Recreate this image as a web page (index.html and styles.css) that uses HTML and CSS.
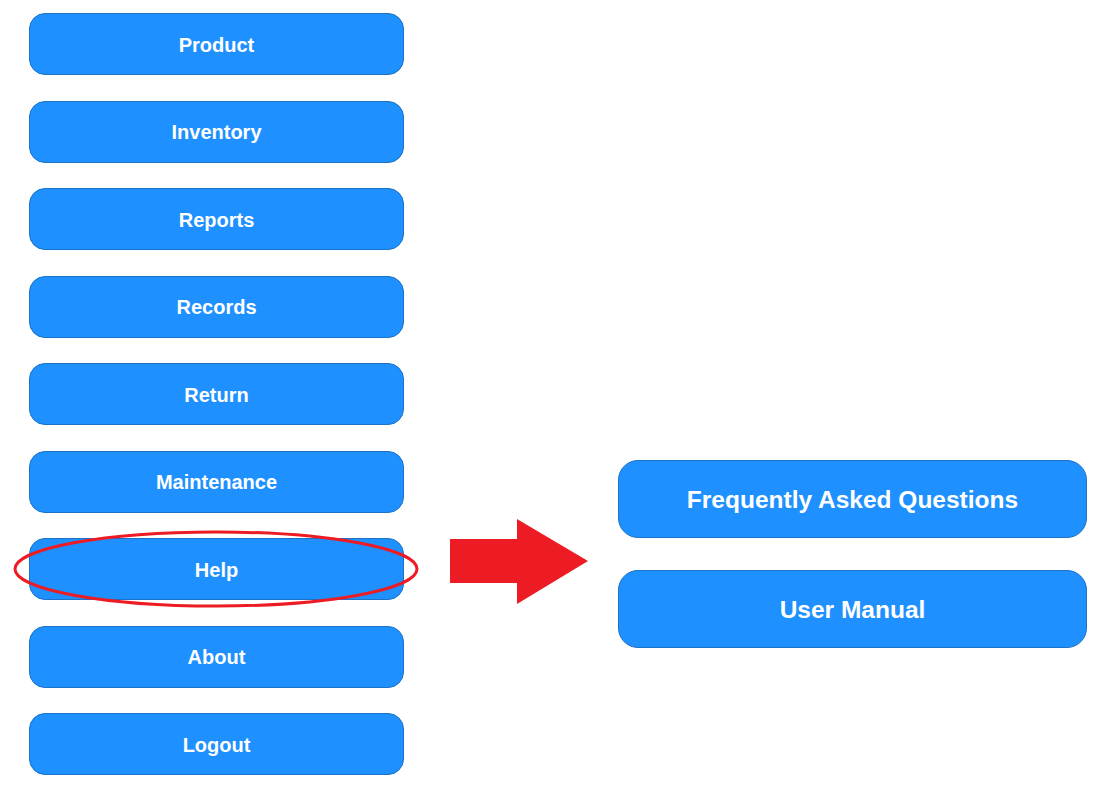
FILE: index.html
```html
<!DOCTYPE html>
<html>
<head>
<meta charset="utf-8">
<link rel="stylesheet" href="styles.css">
</head>
<body>
<div class="page">
  <nav class="menu">
    <div class="btn">Product</div>
    <div class="btn">Inventory</div>
    <div class="btn">Reports</div>
    <div class="btn">Records</div>
    <div class="btn">Return</div>
    <div class="btn">Maintenance</div>
    <div class="btn help">Help
      <svg class="ring" width="406" height="78" viewBox="0 0 406 78"><ellipse cx="203" cy="39" rx="201" ry="37" fill="none" stroke="#ed1c24" stroke-width="3"/></svg>
    </div>
    <div class="btn">About</div>
    <div class="btn">Logout</div>
  </nav>
  <svg class="arrow" width="140" height="86" viewBox="0 0 140 86"><polygon points="0,20 67,20 67,0 138,42 67,85 67,64 0,64" fill="#ed1c24"/></svg>
  <div class="sub">
    <div class="btn big">Frequently Asked Questions</div>
    <div class="btn big">User Manual</div>
  </div>
</div>
</body>
</html>
```
FILE: styles.css
```css
html, body {
  margin: 0;
  background: #ffffff;
}
.page {
  display: flex;
  align-items: flex-start;
  padding: 13px 0 0 29px;
  font-family: "Liberation Sans", Arimo, Arial, sans-serif;
}
.menu {
  display: flex;
  flex-direction: column;
  gap: 25.5px;
  width: 375px;
}
.btn {
  position: relative;
  box-sizing: border-box;
  height: 62px;
  padding-top: 2px;
  display: flex;
  align-items: center;
  justify-content: center;
  background: #1e90ff;
  border: 1px solid #1b72c6;
  border-radius: 16px;
  color: #ffffff;
  font-weight: bold;
  font-size: 20px;
}
.ring {
  position: absolute;
  left: -17px;
  top: -9px;
}
.arrow {
  margin: 506px 0 0 46px;
  flex: none;
}
.sub {
  margin: 447px 0 0 28px;
  display: flex;
  flex-direction: column;
  gap: 32px;
  width: 469px;
}
.btn.big {
  height: 78px;
  border-radius: 20px;
  font-size: 24.5px;
}
```
